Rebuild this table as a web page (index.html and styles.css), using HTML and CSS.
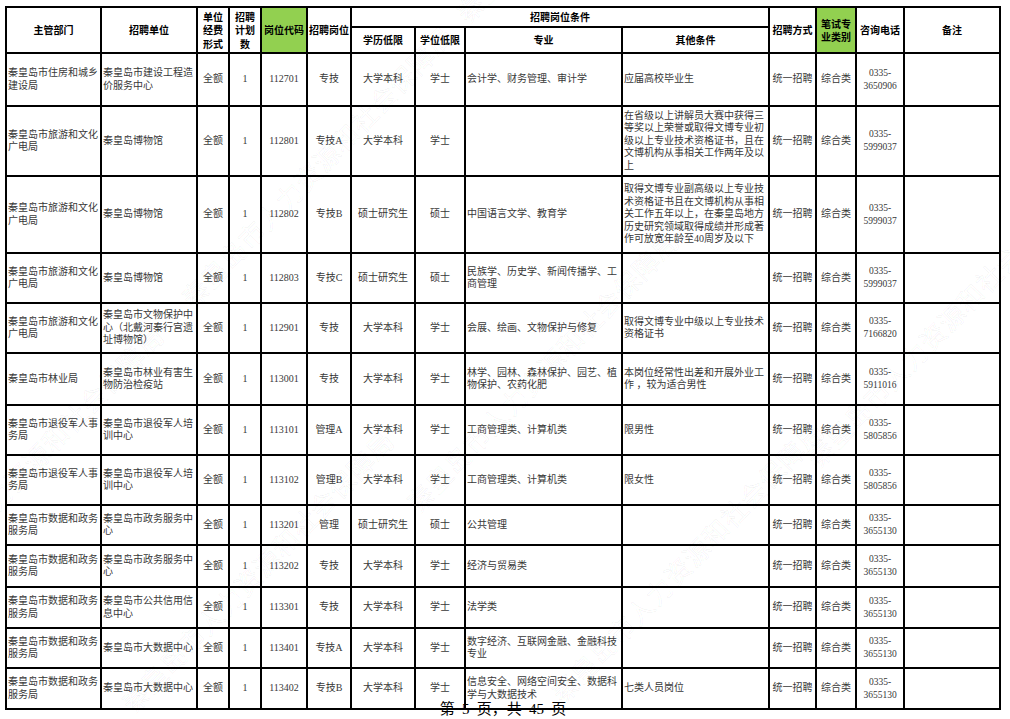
FILE: index.html
```html
<!DOCTYPE html>
<html lang="zh-CN">
<head>
<meta charset="utf-8">
<title>招聘岗位信息表 第5页</title>
<link rel="stylesheet" href="styles.css">
</head>
<body>
<div class="page">
  <table class="grid">
    <colgroup>
      <col class="c-dept"><col class="c-unit"><col class="c-fund"><col class="c-num"><col class="c-code"><col class="c-post"><col class="c-edu"><col class="c-deg"><col class="c-major"><col class="c-other"><col class="c-way"><col class="c-cat"><col class="c-tel"><col class="c-note">
    </colgroup>
    <thead>
      <tr class="h-top">
        <th rowspan="2">主管部门</th>
        <th rowspan="2">招聘单位</th>
        <th rowspan="2">单位<br>经费<br>形式</th>
        <th rowspan="2">招聘<br>计划<br>数</th>
        <th rowspan="2" class="green">岗位代码</th>
        <th rowspan="2">招聘岗位</th>
        <th colspan="4">招聘岗位条件</th>
        <th rowspan="2">招聘方式</th>
        <th rowspan="2" class="green">笔试专<br>业类别</th>
        <th rowspan="2">咨询电话</th>
        <th rowspan="2">备注</th>
      </tr>
      <tr class="h-sub">
        <th>学历低限</th><th>学位低限</th><th>专业</th><th>其他条件</th>
      </tr>
    </thead>
    <tbody>
      <tr class="r53">
        <td class="l">秦皇岛市住房和城乡建设局</td><td class="l">秦皇岛市建设工程造价服务中心</td><td>全额</td><td>1</td><td>112701</td><td>专技</td><td>大学本科</td><td>学士</td><td class="l">会计学、财务管理、审计学</td><td class="l">应届高校毕业生</td><td>统一招聘</td><td>综合类</td><td class="tel">0335-3650906</td><td></td>
      </tr>
      <tr class="r70">
        <td class="l">秦皇岛市旅游和文化广电局</td><td class="l">秦皇岛博物馆</td><td>全额</td><td>1</td><td>112801</td><td>专技A</td><td>大学本科</td><td>学士</td><td class="l"></td><td class="l">在省级以上讲解员大赛中获得三等奖以上荣誉或取得文博专业初级以上专业技术资格证书，且在文博机构从事相关工作两年及以上</td><td>统一招聘</td><td>综合类</td><td class="tel">0335-5999037</td><td></td>
      </tr>
      <tr class="r77">
        <td class="l">秦皇岛市旅游和文化广电局</td><td class="l">秦皇岛博物馆</td><td>全额</td><td>1</td><td>112802</td><td>专技B</td><td>硕士研究生</td><td>硕士</td><td class="l">中国语言文学、教育学</td><td class="l">取得文博专业副高级以上专业技术资格证书且在文博机构从事相关工作五年以上，在秦皇岛地方历史研究领域取得成绩并形成著作可放宽年龄至40周岁及以下</td><td>统一招聘</td><td>综合类</td><td class="tel">0335-5999037</td><td></td>
      </tr>
      <tr class="r50">
        <td class="l">秦皇岛市旅游和文化广电局</td><td class="l">秦皇岛博物馆</td><td>全额</td><td>1</td><td>112803</td><td>专技C</td><td>硕士研究生</td><td>硕士</td><td class="l">民族学、历史学、新闻传播学、工商管理</td><td class="l"></td><td>统一招聘</td><td>综合类</td><td class="tel">0335-5999037</td><td></td>
      </tr>
      <tr class="r50">
        <td class="l">秦皇岛市旅游和文化广电局</td><td class="l">秦皇岛市文物保护中心（北戴河秦行宫遗址博物馆）</td><td>全额</td><td>1</td><td>112901</td><td>专技</td><td>大学本科</td><td>学士</td><td class="l">会展、绘画、文物保护与修复</td><td class="l">取得文博专业中级以上专业技术资格证书</td><td>统一招聘</td><td>综合类</td><td class="tel">0335-7166820</td><td></td>
      </tr>
      <tr class="r52">
        <td class="l">秦皇岛市林业局</td><td class="l">秦皇岛市林业有害生物防治检疫站</td><td>全额</td><td>1</td><td>113001</td><td>专技</td><td>大学本科</td><td>学士</td><td class="l">林学、园林、森林保护、园艺、植物保护、农药化肥</td><td class="l">本岗位经常性出差和开展外业工作 ，较为适合男性</td><td>统一招聘</td><td>综合类</td><td class="tel">0335-5911016</td><td></td>
      </tr>
      <tr class="r50">
        <td class="l">秦皇岛市退役军人事务局</td><td class="l">秦皇岛市退役军人培训中心</td><td>全额</td><td>1</td><td>113101</td><td>管理A</td><td>大学本科</td><td>学士</td><td class="l">工商管理类、计算机类</td><td class="l">限男性</td><td>统一招聘</td><td>综合类</td><td class="tel">0335-5805856</td><td></td>
      </tr>
      <tr class="r50">
        <td class="l">秦皇岛市退役军人事务局</td><td class="l">秦皇岛市退役军人培训中心</td><td>全额</td><td>1</td><td>113102</td><td>管理B</td><td>大学本科</td><td>学士</td><td class="l">工商管理类、计算机类</td><td class="l">限女性</td><td>统一招聘</td><td>综合类</td><td class="tel">0335-5805856</td><td></td>
      </tr>
      <tr class="r40">
        <td class="l">秦皇岛市数据和政务服务局</td><td class="l">秦皇岛市政务服务中心</td><td>全额</td><td>1</td><td>113201</td><td>管理</td><td>硕士研究生</td><td>硕士</td><td class="l">公共管理</td><td class="l"></td><td>统一招聘</td><td>综合类</td><td class="tel">0335-3655130</td><td></td>
      </tr>
      <tr class="r42">
        <td class="l">秦皇岛市数据和政务服务局</td><td class="l">秦皇岛市政务服务中心</td><td>全额</td><td>1</td><td>113202</td><td>专技</td><td>大学本科</td><td>学士</td><td class="l">经济与贸易类</td><td class="l"></td><td>统一招聘</td><td>综合类</td><td class="tel">0335-3655130</td><td></td>
      </tr>
      <tr class="r41">
        <td class="l">秦皇岛市数据和政务服务局</td><td class="l">秦皇岛市公共信用信息中心</td><td>全额</td><td>1</td><td>113301</td><td>专技</td><td>大学本科</td><td>学士</td><td class="l">法学类</td><td class="l"></td><td>统一招聘</td><td>综合类</td><td class="tel">0335-3655130</td><td></td>
      </tr>
      <tr class="r40">
        <td class="l">秦皇岛市数据和政务服务局</td><td class="l">秦皇岛市大数据中心</td><td>全额</td><td>1</td><td>113401</td><td>专技A</td><td>大学本科</td><td>学士</td><td class="l">数字经济、互联网金融、金融科技专业</td><td class="l"></td><td>统一招聘</td><td>综合类</td><td class="tel">0335-3655130</td><td></td>
      </tr>
      <tr class="r41">
        <td class="l">秦皇岛市数据和政务服务局</td><td class="l">秦皇岛市大数据中心</td><td>全额</td><td>1</td><td>113402</td><td>专技B</td><td>大学本科</td><td>学士</td><td class="l">信息安全、网络空间安全、数据科学与大数据技术</td><td class="l">七类人员岗位</td><td>统一招聘</td><td>综合类</td><td class="tel">0335-3655130</td><td></td>
      </tr>
    </tbody>
  </table>
  <div class="footer">第 5 页，共 45 页</div>
</div>
<div class="watermark" aria-hidden="true">
  <span class="wm wm1">秦皇岛市人力资源和社会保障局</span>
  <span class="wm wm2">秦皇岛市人力资源和社会保障局</span>
  <span class="wm wm3">秦皇岛市人力资源和社会保障局</span>
  <span class="wm wm4">秦皇岛市人力资源和社会保障局</span>
  <span class="wm wm5">秦皇岛市人力资源和社会保障局</span>
  <span class="wm wm6">秦皇岛市人力资源和社会保障局</span>
  <span class="wm wm7">秦皇岛市人力资源和社会保障局</span>
</div>
</body>
</html>
```

FILE: styles.css
```css
html, body {
  margin: 0;
  padding: 0;
  background: #ffffff;
}

.page {
  padding: 6px 0 0 5px;
}

.grid {
  border-collapse: collapse;
  table-layout: fixed;
  width: 996px;
  font-family: "Liberation Serif", "Noto Sans CJK SC", serif;
  font-size: 10px;
  line-height: 12.5px;
  color: #383838;
}

.grid th,
.grid td {
  border: 2px solid #000000;
  padding: 0 1px;
  vertical-align: middle;
  text-align: center;
  overflow: hidden;
}

.grid td.l {
  text-align: left;
}

.grid th {
  font-family: "Noto Sans CJK SC", sans-serif;
  font-weight: bold;
  color: #000000;
  line-height: 13.3px;
  white-space: nowrap;
}

.grid th.green {
  background: #92d050;
}

.grid td.tel {
  font-size: 9.5px;
  line-height: 13px;
}

.c-dept { width: 95px; }
.c-unit { width: 96px; }
.c-fund { width: 32px; }
.c-num { width: 32px; }
.c-code { width: 46px; }
.c-post { width: 44px; }
.c-edu { width: 64px; }
.c-deg { width: 50px; }
.c-major { width: 157px; }
.c-other { width: 147px; }
.c-way { width: 47px; }
.c-cat { width: 40px; }
.c-tel { width: 48px; }
.c-note { width: 96px; }

.h-top { height: 20px; }
.h-sub { height: 26px; }
.r40 { height: 40px; }
.r41 { height: 41px; }
.r42 { height: 42px; }
.r50 { height: 50px; }
.r52 { height: 52px; }
.r53 { height: 53px; }
.r70 { height: 70px; }
.r77 { height: 77px; }

.footer {
  width: 996px;
  margin-top: -8px;
  text-align: center;
  font-family: "Liberation Serif", "Noto Sans CJK SC", serif;
  font-size: 15px;
  line-height: 15px;
  word-spacing: 3.5px;
  color: #000000;
  position: relative;
}

.watermark {
  position: absolute;
  left: 0;
  top: 0;
  width: 1010px;
  height: 719px;
  overflow: hidden;
  pointer-events: none;
}

.wm {
  position: absolute;
  font-family: "Noto Sans CJK SC", sans-serif;
  font-size: 26px;
  line-height: 26px;
  letter-spacing: 1px;
  white-space: nowrap;
  color: transparent;
  -webkit-text-stroke: 0.5px rgba(0, 0, 0, 0.08);
  transform-origin: 0 100%;
  transform: rotate(-46deg);
}

.wm1 { left: 195px; top: 285px; }
.wm2 { left: 420px; top: 490px; }
.wm3 { left: 565px; top: 680px; }
.wm4 { left: -95px; top: 585px; }
.wm5 { left: 135px; top: 690px; }
.wm6 { left: 470px; top: 0px; }
.wm7 { left: 820px; top: 445px; }
```
